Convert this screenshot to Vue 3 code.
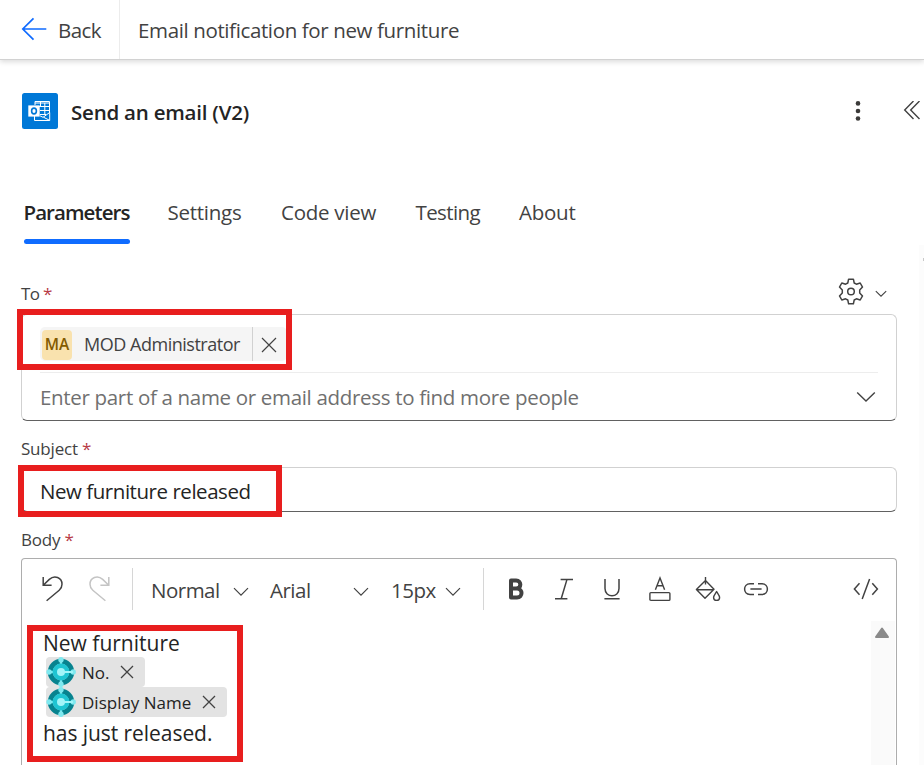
<script setup>
const tabs = [
  { label: 'Parameters', key: 'parameters', active: true },
  { label: 'Settings', key: 'settings' },
  { label: 'Code view', key: 'code' },
  { label: 'Testing', key: 'testing' },
  { label: 'About', key: 'about' },
]
const tokens = [
  { label: 'No.', key: 'no' },
  { label: 'Display Name', key: 'display' },
]
</script>

<template>
  <div class="page">
    <header class="topbar">
      <div class="back">
        <svg class="back-arrow" width="26" height="24" viewBox="0 0 26 24" fill="none" stroke="#0f6bff" stroke-width="1.7">
          <path d="M12.5 1.3 1.8 12 12.5 22.7M1.8 12H25.3" />
        </svg>
        <span class="back-text">Back</span>
      </div>
      <span class="flow-name">Email notification for new furniture</span>
    </header>

    <main class="panel">
      <div class="title-row">
        <svg width="36" height="36" viewBox="0 0 36 36">
          <rect width="36" height="36" rx="2.5" fill="#0078d7" />
          <g fill="none" stroke="#fff" stroke-width="1">
            <path d="M13 12V8.5H27.5V20M13 10H27.5M13 13.5H27.5M18 17.5H27.5M18 21.5H24M18.5 9V14M22.8 10V22" />
            <path d="M12.5 23V27.5H27.7V19.5L21 24.3L18 22.8M21.5 24.2L27.5 27.3" />
          </g>
          <rect x="6.3" y="12.4" width="11.4" height="11.2" fill="#fff" />
          <ellipse cx="12" cy="18" rx="2.4" ry="2.9" fill="none" stroke="#0078d7" stroke-width="1.6" />
        </svg>
        <h1 class="title">Send an email (V2)</h1>
        <svg class="more" width="6" height="22" viewBox="0 0 6 22" fill="#3b3a39">
          <circle cx="3" cy="3.4" r="2.3" /><circle cx="3" cy="11" r="2.3" /><circle cx="3" cy="18.5" r="2.3" />
        </svg>
        <svg class="collapse" width="18" height="20" viewBox="0 0 18 20" fill="none" stroke="#424242" stroke-width="1.4">
          <path d="M10.5 0 1.7 9 10.5 18M16.5 0 7.7 9 16.5 18" />
        </svg>
      </div>

      <nav class="tabs">
        <div v-for="t in tabs" :key="t.key" class="tab" :class="[t.key, { active: t.active }]">
          <span class="tab-text">{{ t.label }}</span>
        </div>
      </nav>

      <section class="form">
        <div class="label-row to-label">
          <span class="label lb-to">To <i>*</i></span>
          <div class="label-tools">
            <svg width="26" height="27" viewBox="0 0 26 27" fill="none" stroke="#424242" stroke-width="1.5" stroke-linejoin="round">
              <path d="M10.6 1.2H15.4L16.2 5 18.4 6.2 22.2 5 24.5 9.1 21.7 12 V15 L24.5 17.9 22.2 22 18.4 20.8 16.2 22 15.4 25.8H10.6L9.8 22 7.6 20.8 3.8 22 1.5 17.9 4.3 15V12L1.5 9.1 3.8 5 7.6 6.2 9.8 5Z" />
              <circle cx="13" cy="13.5" r="3.3" />
            </svg>
            <svg width="12" height="8" viewBox="0 0 12 8" fill="none" stroke="#424242" stroke-width="1.1"><path d="M.8 1.2 6 6.2 11.2 1.2" /></svg>
          </div>
        </div>

        <div class="people-box">
          <div class="chip-row">
            <div class="chip">
              <span class="avatar">MA</span>
              <span class="chip-name">MOD Administrator</span>
              <span class="chip-close">
                <svg width="16" height="16" viewBox="0 0 16 16" fill="none" stroke="#424242" stroke-width="1.2"><path d="M1 1 15 15M15 1 1 15" /></svg>
              </span>
            </div>
          </div>
          <div class="search-row">
            <span class="placeholder">Enter part of a name or email address to find more people</span>
            <svg width="20" height="12" viewBox="0 0 20 12" fill="none" stroke="#424242" stroke-width="1.4"><path d="M1.2 1.4 10 10 18.8 1.4" /></svg>
          </div>
          <div class="mark mark-to"></div>
        </div>

        <div class="label-row subject-label"><span class="label lb-subject">Subject <i>*</i></span></div>
        <div class="subject-box">
          <span class="subject-text">New furniture released</span>
          <div class="mark mark-subject"></div>
        </div>

        <div class="label-row body-label"><span class="label lb-body">Body <i>*</i></span></div>
        <div class="editor">
          <div class="toolbar">
            <svg class="undo" width="22" height="26" viewBox="0 0 22 26" fill="none" stroke="#424242" stroke-width="1.5">
              <path d="M1.2 1V9.3H9.6M1.5 9 7.3 3.4C12.5 -1.3 20 1.5 20 8.2C20 11 18.8 12.8 17.2 14.2L4.6 24.8" />
            </svg>
            <svg class="redo" width="22" height="26" viewBox="0 0 22 26" fill="none" stroke="#c4c4c4" stroke-width="1.5">
              <path d="M20.8 1V9.3H12.4M20.5 9 14.7 3.4C9.5 -1.3 2 1.5 2 8.2C2 11 3.2 12.8 4.8 14.2L17.4 24.8" />
            </svg>
            <span class="rule"></span>
            <div class="drop block-drop"><span>Normal</span>
              <svg width="16" height="10" viewBox="0 0 16 10" fill="none" stroke="#424242" stroke-width="1.2"><path d="M1 1.2 8 8.2 15 1.2" /></svg>
            </div>
            <div class="drop font-drop"><span>Arial</span>
              <svg width="16" height="10" viewBox="0 0 16 10" fill="none" stroke="#424242" stroke-width="1.2"><path d="M1 1.2 8 8.2 15 1.2" /></svg>
            </div>
            <div class="drop size-drop"><span>15px</span>
              <svg width="16" height="10" viewBox="0 0 16 10" fill="none" stroke="#424242" stroke-width="1.2"><path d="M1 1.2 8 8.2 15 1.2" /></svg>
            </div>
            <span class="rule"></span>
            <div class="formats">
              <svg width="26" height="26" viewBox="0 0 26 26" fill="none" stroke="#424242" stroke-width="4" stroke-linejoin="round">
                <path d="M8 4.6H13.2C18.7 4.6 18.7 12.6 13.2 12.6H8ZM8 12.6H14C20 12.6 20 21.6 14 21.6H8Z" />
              </svg>
              <svg width="26" height="26" viewBox="0 0 26 26" fill="none" stroke="#424242" stroke-width="1.5">
                <path d="M9.6 3.4H22M4 22.8H16.4M16 3.4 10.2 22.8" />
              </svg>
              <svg width="26" height="26" viewBox="0 0 26 26" fill="none" stroke="#424242" stroke-width="1.5">
                <path d="M6 3V12.5C6 22.2 20 22.2 20 12.5V3M5.4 22.8H20.6" />
              </svg>
              <svg width="26" height="26" viewBox="0 0 26 26" fill="none" stroke="#424242" stroke-width="1.4">
                <path d="M8.4 13.8 13 2 17.6 13.8M10 9.7H16" />
                <rect x="2.9" y="16.6" width="20" height="7.8" rx="1" />
              </svg>
              <svg width="26" height="26" viewBox="0 0 26 26" fill="none" stroke="#424242" stroke-width="1.4" stroke-linejoin="round">
                <path d="M10.5 4.5 1.4 13.6 10 22.2 19 13.3ZM1.4 13.7H18.8M10.5 1V8.5" />
                <path d="M21.6 15.6C20.2 18 18.6 19.6 18.6 21.4C18.6 25.4 24.6 25.4 24.6 21.4C24.6 19.6 23 18 21.6 15.6Z" />
              </svg>
              <svg width="26" height="26" viewBox="0 0 26 26" fill="none" stroke="#424242" stroke-width="1.5">
                <path d="M11 7.8H7C-.2 7.8-.2 18.4 7 18.4H11M15 7.8H19C26.2 7.8 26.2 18.4 19 18.4H15M7.4 13.1H18.6" />
              </svg>
            </div>
            <svg class="code-icon" width="26" height="22" viewBox="0 0 26 22" fill="none" stroke="#424242" stroke-width="1.5">
              <path d="M6.5 5.2 1.4 11 6.5 16.8M19.3 5.2 24.4 11 19.3 16.8M16.6 1 9.2 21" />
            </svg>
          </div>

          <div class="editor-main">
            <div class="content">
              <p class="line-one">New furniture</p>
              <div v-for="t in tokens" :key="t.key" class="token" :class="t.key">
                <svg width="30" height="30" viewBox="0 0 30 30">
                  <circle cx="15" cy="15" r="10.7" fill="none" stroke="#07838f" stroke-width="5" />
                  <g fill="#7fe9f0">
                    <circle cx="15" cy="2.8" r="2.7" /><circle cx="15" cy="27.2" r="2.7" />
                    <circle cx="3" cy="15" r="2.7" /><circle cx="27.2" cy="15" r="2.7" />
                    <path d="M13.8 3H16.2V8H13.8ZM13.8 22H16.2V27H13.8ZM3 13.8H8V16.2H3Z" />
                  </g>
                  <circle cx="15" cy="15" r="8.4" fill="#1fc5d2" />
                  <circle cx="15" cy="15" r="4" fill="#a2f4f8" />
                  <path d="M15 15H27" stroke="#a2f4f8" stroke-width="2" />
                </svg>
                <span class="token-text">{{ t.label }}</span>
                <svg width="14" height="14" viewBox="0 0 14 14" fill="none" stroke="#424242" stroke-width="1.3"><path d="M1 1 13 13M13 1 1 13" /></svg>
              </div>
              <p class="line-last">has just released.</p>
              <div class="mark mark-body"></div>
            </div>
            <div class="inner-scroll">
              <svg width="16" height="12" viewBox="0 0 16 12"><path d="M8 1.5 14 10H2Z" fill="#8a8a8a" stroke="#8a8a8a" stroke-width="2" stroke-linejoin="round" /></svg>
            </div>
          </div>
        </div>
      </section>
    </main>
    <div class="outer-scroll"><i></i></div>
  </div>
</template>

<style>
html, body { margin: 0; overflow: hidden; background: #fff; }
</style>

<style scoped>
* { box-sizing: border-box; }
svg { display: block; flex: none; }
p, h1 { margin: 0; }
.page {
  position: relative;
  width: 924px;
  height: 765px;
  overflow: hidden;
  display: flex;
  flex-direction: column;
  background: #fff;
  color: #424242;
  font-family: "Open Sans", "Noto Sans", sans-serif;
  font-size: 20.5px;
  line-height: 28px;
  white-space: nowrap;
}
.topbar {
  flex: none;
  height: 60px;
  display: flex;
  align-items: center;
  border-bottom: 1px solid #d2d2d2;
  box-shadow: 0 2px 5px rgba(0, 0, 0, .14);
}
.back {
  width: 120px;
  height: 59px;
  display: flex;
  align-items: center;
  padding-left: 21px;
  border-right: 1px solid #ececec;
}
.back-arrow { margin-bottom: 1px; }
.back-text { margin: 1px 0 0 11px; letter-spacing: -.6px; }
.flow-name { margin: 1px 0 0 18px; letter-spacing: -.37px; }
.panel { flex: 1; display: flex; flex-direction: column; }
.title-row {
  flex: none;
  display: flex;
  align-items: center;
  height: 36px;
  margin: 33px 3px 0 22px;
}
.title {
  flex: 1;
  margin: 1px 0 0 13px;
  font-size: 20.5px;
  font-weight: 600;
  line-height: 28px;
  color: #242424;
  letter-spacing: -.22px;
}
.collapse { margin-left: 42px; }
.tabs {
  flex: none;
  display: grid;
  grid-template-columns: 143.5px 113.5px 134.5px 103.5px 100px;
  height: 46px;
  margin: 69px 0 0 24px;
}
.tab { position: relative; height: 46px; letter-spacing: -.25px; }
.tab.testing { letter-spacing: -.6px; }
.tab.active {
  width: 106px;
  color: #242424;
  font-weight: 600;
  letter-spacing: -.94px;
}
.active .tab-text { margin-left: -.5px; }
.active::after {
  content: "";
  position: absolute;
  left: 0;
  right: 0;
  bottom: 0;
  height: 5px;
  border-radius: 3px;
  background: #0f6cff;
}
.form { flex: 1; display: flex; flex-direction: column; margin: 0 27px 0 21px; }
.label-row { flex: none; display: flex; justify-content: space-between; align-items: center; }
.label { font-size: 17px; line-height: 24px; letter-spacing: -.2px; }
.label i { font-style: normal; color: #b83a45; }
.lb-to { letter-spacing: -.7px; margin-top: 1px; }
.to-label { height: 30px; margin-top: 34px; }
.label-tools { display: flex; align-items: center; gap: 11px; padding: 0 10px 3px 0; }
.label-tools svg + svg { margin-top: 4px; }
.people-box {
  position: relative;
  flex: none;
  height: 107px;
  margin-top: 6px;
  padding: 0 18px;
  border: 1px solid #d1d1d1;
  border-bottom-color: #616161;
  border-radius: 6px;
}
.chip-row { height: 58px; padding-top: 12px; border-bottom: 1px solid #ededed; }
.chip {
  display: flex;
  align-items: center;
  width: 247px;
  height: 34px;
  border-radius: 5px;
  background: #f5f5f5;
}
.avatar {
  width: 30px;
  height: 30px;
  margin: 2px 0 0 2px;
  border-radius: 4px;
  background: #f9e2ae;
  color: #835b00;
  font-size: 15.5px;
  font-weight: 600;
  line-height: 29px;
  text-align: center;
}
.chip-name { width: 168px; margin: -1px 0 0 12px; font-size: 18px; letter-spacing: -.48px; }
.chip-close {
  flex: 1;
  display: flex;
  align-items: center;
  height: 34px;
  padding: 2px 0 0 8px;
  border-left: 1px solid #d1d1d1;
}
.search-row { display: flex; align-items: center; justify-content: space-between; height: 48px; padding-right: 2px; }
.placeholder { color: #707070; letter-spacing: -.32px; }
.mark { position: absolute; border: 6px solid #e81e1e; }
.mark-to { left: -5px; top: -6px; width: 275px; height: 61px; }
.subject-label { height: 24px; margin-top: 16px; }
.subject-box {
  position: relative;
  flex: none;
  height: 45px;
  margin-top: 6px;
  padding: 9px 18px;
  border: 1px solid #d1d1d1;
  border-bottom-color: #616161;
  border-radius: 6px;
  color: #242424;
}
.subject-text { letter-spacing: -.46px; }
.mark-subject { left: -4px; top: -3px; width: 264px; height: 52px; }
.body-label { height: 24px; margin-top: 16px; }
.editor {
  flex: 1;
  display: flex;
  flex-direction: column;
  margin-top: 6px;
  border: 1px solid #adadad;
  border-bottom: 0;
  border-radius: 4px 4px 0 0;
}
.toolbar { flex: none; display: flex; align-items: center; height: 60px; padding-left: 20px; }
.undo { margin-bottom: 0; }
.redo { margin-left: 24px; }
.rule { width: 1px; height: 42px; background: #d6d6d6; }
.redo + .rule { margin-left: 22px; }
.drop { display: flex; align-items: center; justify-content: space-between; padding-top: 2px; letter-spacing: -.5px; }
.drop svg { margin-top: 4px; }
.block-drop { width: 98px; margin-left: 18px; }
.font-drop { width: 99px; margin-left: 21px; }
.size-drop { width: 70px; margin-left: 22px; }
.size-drop + .rule { margin-left: 22px; }
.formats { display: flex; gap: 22px; margin-left: 19px; }
.code-icon { margin: 0 17px 0 auto; }
.editor-main { flex: 1; display: flex; justify-content: space-between; padding-top: 2px; }
.content { position: relative; width: 300px; padding: 8px 0 0 21px; color: #242424; }
.line-one { height: 28px; line-height: 28px; font-size: 21px; }
.token {
  display: flex;
  align-items: center;
  height: 30px;
  margin-left: 3px;
  border-radius: 4px;
  background: #e3e3e3;
  font-size: 17px;
}
.token-text { margin: 1px 0 0 6px; }
.token.no { width: 99px; }
.token.no .token-text { width: 38px; }
.token.display { width: 181px; }
.token.display .token-text { width: 120px; }
.line-last { margin-top: 1px; line-height: 31px; font-size: 21px; letter-spacing: -.06px; }
.mark-body { left: 5px; top: 4px; width: 216px; height: 137px; }
.inner-scroll { width: 24px; padding: 6px 0 0 3px; background: #fafafa; margin-right: 1px; }
.outer-scroll { position: absolute; top: 245px; right: 0; width: 5px; height: 520px; background: #fcfcfc; }
.outer-scroll i { position: absolute; right: 0; top: 13px; width: 1px; height: 3px; background: #c8c8c8; }
</style>
